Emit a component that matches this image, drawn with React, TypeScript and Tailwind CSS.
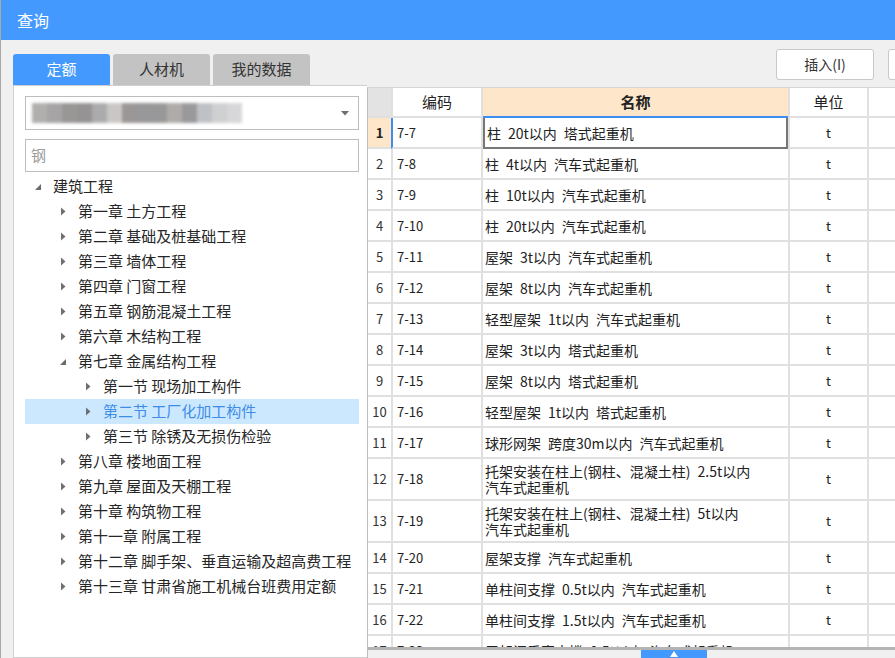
import { Fragment } from "react"

const FONT = { fontFamily: '"Microsoft YaHei", "Noto Sans CJK SC", "Noto Sans", sans-serif' }

type Node = { label: string; level: number; expanded?: boolean; selected?: boolean }

const tree: Node[] = [
  { label: "建筑工程", level: 0, expanded: true },
  { label: "第一章 土方工程", level: 1 },
  { label: "第二章 基础及桩基础工程", level: 1 },
  { label: "第三章 墙体工程", level: 1 },
  { label: "第四章 门窗工程", level: 1 },
  { label: "第五章 钢筋混凝土工程", level: 1 },
  { label: "第六章 木结构工程", level: 1 },
  { label: "第七章 金属结构工程", level: 1, expanded: true },
  { label: "第一节 现场加工构件", level: 2 },
  { label: "第二节 工厂化加工构件", level: 2, selected: true },
  { label: "第三节 除锈及无损伤检验", level: 2 },
  { label: "第八章 楼地面工程", level: 1 },
  { label: "第九章 屋面及天棚工程", level: 1 },
  { label: "第十章 构筑物工程", level: 1 },
  { label: "第十一章 附属工程", level: 1 },
  { label: "第十二章 脚手架、垂直运输及超高费工程", level: 1 },
  { label: "第十三章 甘肃省施工机械台班费用定额", level: 1 },
]

const rows: { code: string; name: string[] }[] = [
  { code: "7-7", name: ["柱 20t以内 塔式起重机"] },
  { code: "7-8", name: ["柱 4t以内 汽车式起重机"] },
  { code: "7-9", name: ["柱 10t以内 汽车式起重机"] },
  { code: "7-10", name: ["柱 20t以内 汽车式起重机"] },
  { code: "7-11", name: ["屋架 3t以内 汽车式起重机"] },
  { code: "7-12", name: ["屋架 8t以内 汽车式起重机"] },
  { code: "7-13", name: ["轻型屋架 1t以内 汽车式起重机"] },
  { code: "7-14", name: ["屋架 3t以内 塔式起重机"] },
  { code: "7-15", name: ["屋架 8t以内 塔式起重机"] },
  { code: "7-16", name: ["轻型屋架 1t以内 塔式起重机"] },
  { code: "7-17", name: ["球形网架 跨度30m以内 汽车式起重机"] },
  { code: "7-18", name: ["托架安装在柱上(钢柱、混凝土柱) 2.5t以内", "汽车式起重机"] },
  { code: "7-19", name: ["托架安装在柱上(钢柱、混凝土柱) 5t以内", "汽车式起重机"] },
  { code: "7-20", name: ["屋架支撑 汽车式起重机"] },
  { code: "7-21", name: ["单柱间支撑 0.5t以内 汽车式起重机"] },
  { code: "7-22", name: ["单柱间支撑 1.5t以内 汽车式起重机"] },
  { code: "7-23", name: ["屋架间垂直支撑 0.5t以内 汽车式起重机"] },
]

function Caret({ open }: { open?: boolean }) {
  if (open)
    return (
      <svg width="8" height="8" viewBox="0 0 8 8" className="shrink-0">
        <path d="M7 1 L7 7 L1 7 Z" fill="#6b6b6b" />
      </svg>
    )
  return (
    <svg width="8" height="9" viewBox="0 0 8 9" className="shrink-0">
      <path d="M2 0.5 L6.5 4.5 L2 8.5 Z" fill="#707070" />
    </svg>
  )
}

export default function App() {
  return (
    <div className="w-[895px] h-[658px] overflow-hidden flex flex-col bg-[#f0f0f0] border-l border-[#a9a9a9]" style={FONT}>
      {/* title bar */}
      <div className="h-[40px] shrink-0 bg-[#4499fe] flex items-center pl-[16px] text-white text-[16px]">查询</div>

      <div className="flex flex-1 min-h-0">
        {/* left column */}
        <div className="w-[366px] shrink-0 flex flex-col pl-[12px] pt-[14px]">
          <div className="flex gap-[3px] h-[31px] shrink-0">
            <div className="w-[97px] rounded-t-[3px] bg-[#4499fe] text-white text-[15px] flex items-center justify-center">定额</div>
            <div className="w-[97px] rounded-t-[3px] bg-[#c3c3c3] text-[#333] text-[15px] flex items-center justify-center">人材机</div>
            <div className="w-[97px] rounded-t-[3px] bg-[#c3c3c3] text-[#333] text-[15px] flex items-center justify-center">我的数据</div>
          </div>
          <div className="flex-1 bg-white border border-[#cfcfcf] border-r-0 pl-[11px] pr-[8px] pt-[10px] flex flex-col">
            <div className="h-[34px] border border-[#bdbdbd] flex items-center pl-[6px] pr-[9px]">
              <div className="flex h-[20px] blur-[1.5px] opacity-90">
                <div className="w-[15px] bg-[#a9a7a6]" />
                <div className="w-[15px] bg-[#9d9b9c]" />
                <div className="w-[15px] bg-[#8f8b8b]" />
                <div className="w-[15px] bg-[#8a8888]" />
                <div className="w-[15px] bg-[#a3a3a5]" />
                <div className="w-[15px] bg-[#c4c2bf]" />
                <div className="w-[15px] bg-[#928c8c]" />
                <div className="w-[15px] bg-[#8d8c8e]" />
                <div className="w-[15px] bg-[#8f8d8e]" />
                <div className="w-[15px] bg-[#a7a39f]" />
                <div className="w-[15px] bg-[#8f8f91]" />
                <div className="w-[15px] bg-[#b8bcc0]" />
                <div className="w-[15px] bg-[#cacbcd]" />
                <div className="w-[15px] bg-[#d3d3d5]" />
              </div>
              <div className="flex-1" />
              <svg width="8" height="5" viewBox="0 0 8 5">
                <path d="M0 0 L8 0 L4 4.5 Z" fill="#6e6e6e" />
              </svg>
            </div>
            <div className="h-[33px] mt-[9px] border border-[#bdbdbd] flex items-center pl-[5px] text-[15px] text-[#9a9a9a]">钢</div>
            <div className="mt-[2px] flex flex-col">
              {tree.map((n) => (
                <div
                  key={n.label}
                  className={`h-[25px] flex items-center text-[15px] ${n.selected ? "bg-[#cce8ff] text-[#3d8ce8]" : "text-[#262626]"}`}
                  style={{ paddingLeft: 9 + n.level * 25 }}
                >
                  <span className="w-[19px] flex">
                    <Caret open={n.expanded} />
                  </span>
                  <span className="whitespace-pre">{n.label}</span>
                </div>
              ))}
            </div>
          </div>
        </div>

        {/* right column */}
        <div className="flex-1 min-w-0 flex flex-col">
          <div className="h-[47px] shrink-0 flex items-start pt-[9px] pl-[409px] gap-[14px] overflow-hidden">
            <button className="w-[98px] h-[31px] shrink-0 bg-white border border-[#c9c9c9] rounded-[3px] text-[14px] text-[#333]">插入(I)</button>
            <button className="w-[98px] h-[31px] shrink-0 bg-white border border-[#c9c9c9] rounded-[3px] text-[14px] text-[#333]" />
          </div>
          <div className="flex-1 min-h-0 flex flex-col bg-white border-l border-[#bdbdbd] border-t border-t-[#d6d6d6]">
            <div className="flex-1 min-h-0 overflow-hidden">
              <div className="grid grid-cols-[25px_90px_305px_81px_60px] text-[14px] text-[#222]">
                {/* header */}
                <div className="h-[30px] bg-[#e3e3e3] border-r-2 border-b-2 border-[#e0e0e0]" />
                <div className="h-[30px] flex items-center justify-center text-[15px] border-r-2 border-b-2 border-[#e0e0e0]">编码</div>
                <div className="h-[30px] flex items-center justify-center text-[15px] font-bold bg-[#fde6c9] border-b-2 border-b-[#3d8ef0]">名称</div>
                <div className="h-[30px] flex items-center justify-center text-[15px] border-l-2 border-r-2 border-b-2 border-[#e0e0e0]">单位</div>
                <div className="h-[30px] border-b-2 border-[#e0e0e0]" />
                {rows.map((r, i) => {
                  const h = r.name.length > 1 ? "h-[42px]" : "h-[31px]"
                  const first = i === 0
                  return (
                    <Fragment key={r.code}>
                      <div
                        className={`${h} flex items-center justify-center text-[13px] border-r-2 border-b-2 border-[#e0e0e0] ${first ? "bg-[#fde6c9] font-bold" : "text-[#333]"}`}
                      >
                        {i + 1}
                      </div>
                      <div
                        className={`${h} flex items-center pl-[4px] text-[13px] border-r-2 border-b-2 border-[#e0e0e0] ${first ? "border-l-2 border-l-[#3d8ef0] -ml-[2px]" : ""}`}
                      >
                        {r.code}
                      </div>
                      <div
                        className={`${h} flex flex-col justify-center pl-[2px] leading-[16px] whitespace-pre ${first ? "border-2 border-[#777] border-t-0" : "border-b-2 border-[#e0e0e0]"}`}
                      >
                        {r.name.map((l) => (
                          <span key={l}>{l.replace(/ /g, "\u2002")}</span>
                        ))}
                      </div>
                      <div className={`${h} flex items-center justify-center text-[13px] border-l-2 border-r-2 border-b-2 border-[#e0e0e0]`}>t</div>
                      <div className={`${h} border-b-2 border-[#e0e0e0]`} />
                    </Fragment>
                  )
                })}
              </div>
            </div>
            {/* horizontal scrollbar */}
            <div className="h-[11px] shrink-0 border-t-[3px] border-[#b4b4b4] bg-[#f0f0f0] flex pl-[273px]">
              <div className="w-[66px] h-full bg-[#4499fe] flex items-center justify-center">
                <svg width="8" height="6" viewBox="0 0 8 6">
                  <path d="M4 0 L8 6 L0 6 Z" fill="#fff" />
                </svg>
              </div>
            </div>
          </div>
        </div>
      </div>
    </div>
  )
}
